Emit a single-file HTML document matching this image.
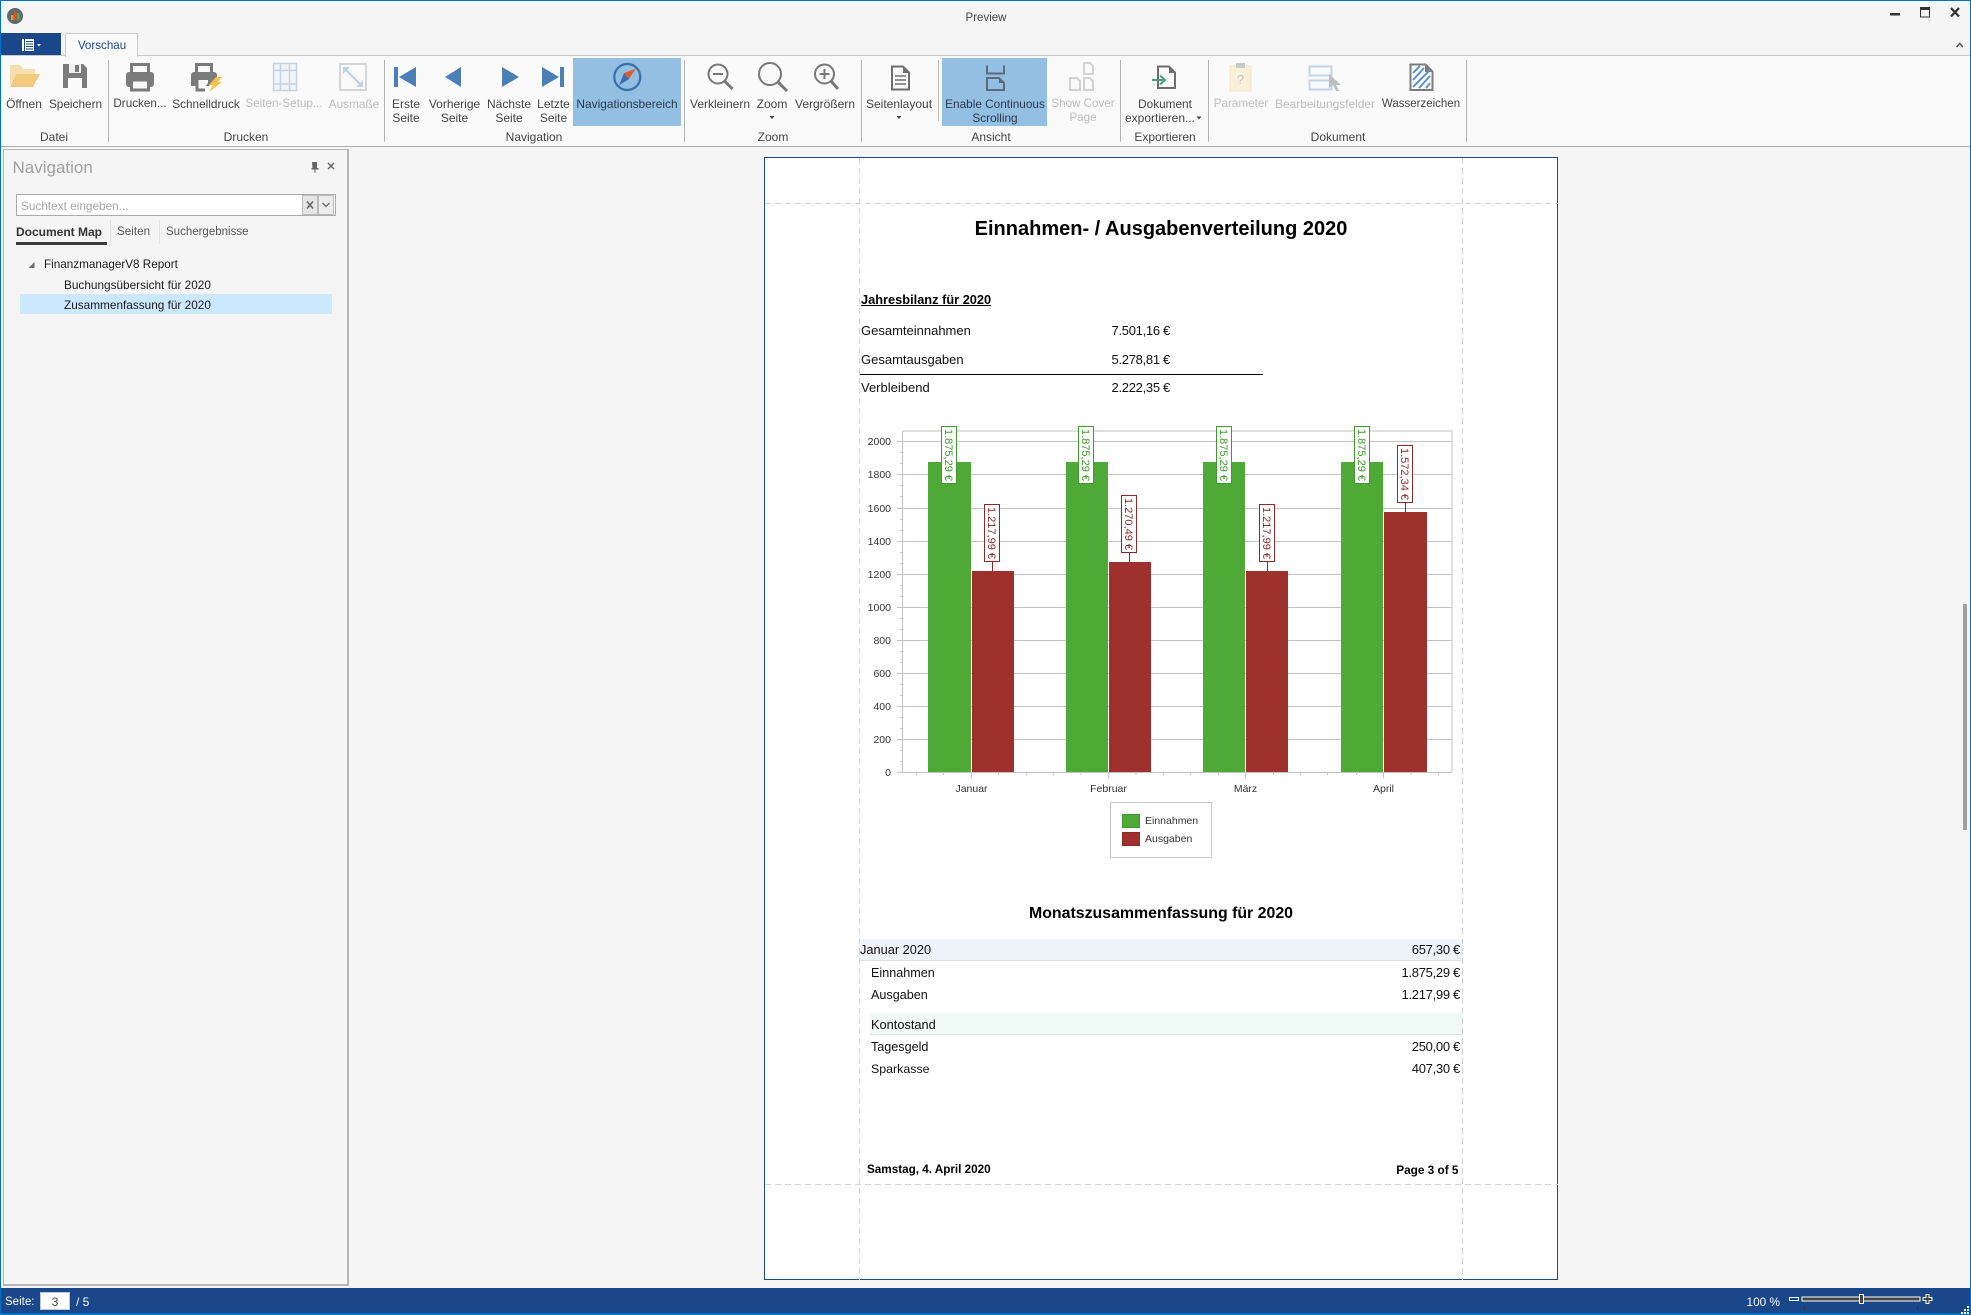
<!DOCTYPE html>
<html lang="de"><head><meta charset="utf-8"><title>Preview</title>
<style>
html,body{margin:0;padding:0;width:1971px;height:1315px;overflow:hidden;background:#f5f5f5}
body{position:relative;font-family:"Liberation Sans",sans-serif;color:#444}
div{position:absolute;box-sizing:border-box}
.c{transform:translate(-50%,-50%);white-space:nowrap;font-size:12px;line-height:14px;text-align:center}
.l{transform:translateY(-50%);white-space:nowrap;font-size:12px;line-height:14px}
.r{transform:translate(-100%,-50%);white-space:nowrap;font-size:12px;line-height:14px}
.d{color:#bdbdbd}
.p{color:#111;font-size:13px;line-height:16px}
.v{letter-spacing:-.3px}
.t{font-size:11.8px;color:#1a1a1a}
.b{font-weight:bold;color:#000}
.sep{width:1px;top:60px;height:82px;background:#b4b4b4}
.w{color:#fff}
svg{position:absolute;left:0;top:0}
</style></head><body>

<!-- ribbon background -->
<div style="left:0;top:55px;width:1971px;height:92px;background:#fafafa;border-top:1px solid #c9c9c9;border-bottom:1px solid #ababab"></div>
<div style="left:1px;top:33px;width:60px;height:22px;background:#19478a"></div>
<div style="left:65px;top:33px;width:73px;height:24px;background:#fafafa;border:1px solid #c9c9c9;border-bottom:0"></div>
<div class="c" style="left:102px;top:46px;color:#19478a;font-size:11.6px">Vorschau</div>
<div class="c" style="left:986px;top:17.500px;font-size:11.5px">Preview</div>

<!-- highlighted buttons -->
<div style="left:573px;top:58px;width:108px;height:68px;background:#93bfe2"></div>
<div style="left:942px;top:58px;width:105px;height:68px;background:#93bfe2"></div>

<!-- separators -->
<div class="sep" style="left:108px"></div><div class="sep" style="left:384px"></div><div class="sep" style="left:684px"></div><div class="sep" style="left:861px"></div><div class="sep" style="left:938px;height:61px"></div><div class="sep" style="left:1120px"></div><div class="sep" style="left:1208px"></div><div class="sep" style="left:1466px"></div>

<!-- ribbon labels -->
<div class="c" style="left:24px;top:104px">Öffnen</div>
<div class="c" style="left:75.500px;top:104px;font-size:11.8px">Speichern</div>
<div class="c" style="left:140px;top:104px;font-size:11.7px">Drucken...</div>
<div class="c" style="left:206px;top:104px;font-size:11.8px">Schnelldruck</div>
<div class="c d" style="left:284px;top:104px;font-size:11.7px">Seiten-Setup...</div>
<div class="c d" style="left:354px;top:104px;font-size:11.8px">Ausmaße</div>
<div class="c" style="left:406px;top:111px">Erste<br>Seite</div>
<div class="c" style="left:454.500px;top:111px">Vorherige<br>Seite</div>
<div class="c" style="left:509px;top:111px">Nächste<br>Seite</div>
<div class="c" style="left:553.500px;top:111px">Letzte<br>Seite</div>
<div class="c" style="left:627px;top:104px;color:#2a3a4d;font-size:11.9px">Navigationsbereich</div>
<div class="c" style="left:720px;top:104px">Verkleinern</div>
<div class="c" style="left:772px;top:104px">Zoom</div>
<div class="c" style="left:825px;top:104px">Vergrößern</div>
<div class="c" style="left:899px;top:104px">Seitenlayout</div>
<div class="c" style="left:995px;top:111px;color:#2a3a4d;font-size:11.8px">Enable Continuous<br>Scrolling</div>
<div class="c d" style="left:1083px;top:111px;font-size:11.6px">Show Cover<br>Page</div>
<div class="c" style="left:1165px;top:104px;font-size:11.8px">Dokument</div>
<div class="c" style="left:1160px;top:118px;font-size:12px">exportieren...</div>
<div class="c d" style="left:1241px;top:104px;font-size:11.7px">Parameter</div>
<div class="c d" style="left:1325px;top:104px;font-size:11.9px">Bearbeitungsfelder</div>
<div class="c" style="left:1421px;top:104px;font-size:11.5px">Wasserzeichen</div>
<div class="c" style="left:54px;top:137px">Datei</div>
<div class="c" style="left:246px;top:137px">Drucken</div>
<div class="c" style="left:534px;top:137px">Navigation</div>
<div class="c" style="left:773px;top:137px">Zoom</div>
<div class="c" style="left:991px;top:137px">Ansicht</div>
<div class="c" style="left:1165px;top:137px">Exportieren</div>
<div class="c" style="left:1338px;top:137px">Dokument</div>

<!-- navigation panel -->
<div style="left:3px;top:149px;width:346px;height:1137px;background:#f5f5f5;border:1px solid #b5b5b5;border-width:1px 2px 2px 1px"></div>
<div class="l" style="left:12.500px;top:168px;font-size:17px;line-height:20px;color:#a0a0a0">Navigation</div>
<div style="left:16px;top:194px;width:320px;height:22px;background:#fff;border:1px solid #ababab"></div>
<div class="l" style="left:21px;top:206px;color:#a5a5a5;font-size:11.8px">Suchtext eingeben...</div>
<div style="left:302px;top:195px;width:16px;height:20px;background:#e6e6e6;border:1px solid #bbb"></div>
<div style="left:318px;top:195px;width:16px;height:20px;background:#ececec;border:1px solid #bbb"></div>
<div class="l b" style="left:16px;top:232px;color:#333">Document Map</div>
<div style="left:16px;top:242px;width:91px;height:3px;background:#3a3a3a"></div>
<div style="left:110px;top:220px;width:1px;height:24px;background:#e2e2e2"></div>
<div class="l" style="left:117px;top:232px;color:#555;font-size:11.7px">Seiten</div>
<div style="left:159px;top:220px;width:1px;height:24px;background:#e2e2e2"></div>
<div class="l" style="left:166px;top:232px;color:#555;font-size:11.5px">Suchergebnisse</div>
<div style="left:20px;top:294px;width:312px;height:20px;background:#cce8ff"></div>
<div class="l t" style="left:44px;top:265px;font-size:11.7px">FinanzmanagerV8 Report</div>
<div class="l t" style="left:64px;top:285px">Buchungsübersicht für 2020</div>
<div class="l t" style="left:64px;top:305px">Zusammenfassung für 2020</div>

<!-- scrollbar -->
<div style="left:1963px;top:604px;width:4px;height:226px;background:#a0a0a0"></div>

<!-- report page -->
<div style="left:764px;top:157px;width:794px;height:1123px;background:#fff;border:1px solid #1b4a8a"></div>
<div style="left:859px;top:939px;width:604px;height:22px;background:#eef2f9;border-bottom:1px solid #dde2ea"></div>
<div style="left:870px;top:1013px;width:593px;height:22px;background:#f0f9f5;border-bottom:1px solid #dce6e2"></div>
<div style="left:860px;top:374px;width:403px;height:1px;background:#000"></div>

<div class="c b" style="left:1161px;top:229px;font-size:20px;line-height:24px">Einnahmen- / Ausgabenverteilung 2020</div>
<div class="l p b" style="left:861px;top:300px;text-decoration:underline;font-size:12.800px">Jahresbilanz für 2020</div>
<div class="l p" style="left:861px;top:331px">Gesamteinnahmen</div>
<div class="l p" style="left:861px;top:360px">Gesamtausgaben</div>
<div class="l p" style="left:861px;top:388px">Verbleibend</div>
<div class="r p v" style="left:1170px;top:331px">7.501,16 €</div>
<div class="r p v" style="left:1170px;top:360px">5.278,81 €</div>
<div class="r p v" style="left:1170px;top:388px">2.222,35 €</div>

<div class="c b" style="left:1161px;top:913.500px;font-size:15.900px;line-height:18px">Monatszusammenfassung für 2020</div>
<div class="l p" style="left:860px;top:950px;font-size:12.800px">Januar 2020</div><div class="r p v" style="left:1460px;top:950px">657,30 €</div>
<div class="l p" style="left:871px;top:973px;font-size:12.600px">Einnahmen</div><div class="r p v" style="left:1460px;top:973px">1.875,29 €</div>
<div class="l p" style="left:871px;top:995px;font-size:12.600px">Ausgaben</div><div class="r p v" style="left:1460px;top:995px">1.217,99 €</div>
<div class="l p" style="left:871px;top:1024.500px;font-size:12.800px">Kontostand</div>
<div class="l p" style="left:871px;top:1047px;font-size:12.600px">Tagesgeld</div><div class="r p v" style="left:1460px;top:1047px">250,00 €</div>
<div class="l p" style="left:871px;top:1069px;font-size:12.400px">Sparkasse</div><div class="r p v" style="left:1460px;top:1069px">407,30 €</div>
<div class="l b" style="left:867px;top:1170px;font-size:11.700px">Samstag, 4. April 2020</div>
<div class="r b" style="left:1458.500px;top:1170px;font-size:11.800px">Page 3 of 5</div>

<!-- status bar -->
<div style="left:0;top:1288px;width:1971px;height:27px;background:#19478a"></div>
<div class="l w" style="left:5px;top:1302px;font-size:11.500px">Seite:</div>
<div style="left:40px;top:1292px;width:30px;height:18px;background:#fff;border:1px solid #c0c8d8"></div>
<div class="c" style="left:55px;top:1302px;color:#444">3</div>
<div class="l w" style="left:76px;top:1302px">/ 5</div>
<div class="r w" style="left:1780px;top:1302px;font-size:11.800px">100 %</div>

<!-- window frame -->
<div style="left:0;top:0;width:1971px;height:1315px;border:1px solid #0072c6;border-bottom-width:2px;pointer-events:none"></div>

<svg width="1971" height="1315" viewBox="0 0 1971 1315" xmlns="http://www.w3.org/2000/svg">
<!-- app icon -->
<circle cx="15" cy="16" r="8" fill="#5a6b70"/><rect x="11" y="15" width="2.500" height="5" fill="#e0a030"/><rect x="14" y="11" width="2.500" height="9" fill="#d9502e"/><rect x="17" y="13" width="2.500" height="7" fill="#58a83e"/>
<!-- app menu icon -->
<path d="M22 39h2v12h-2zM25 39h9v12h-9z" fill="#fff"/><path d="M26 41.500h7M26 44h7M26 46.500h7M26 49h7" stroke="#19478a"/><path d="M37 44h4l-2 2.500z" fill="#dfe6f0"/>
<!-- window buttons -->
<rect x="1890" y="13" width="10" height="2.500" fill="#333"/>
<rect x="1920.500" y="8" width="9" height="9" fill="none" stroke="#333"/><rect x="1920" y="7" width="10" height="3" fill="#333"/>
<path d="M1951 8l8 8.500M1959 8l-8 8.500" stroke="#333" stroke-width="2.200"/>
<path d="M1956.500 47l3.200-3.500 3.200 3.500" fill="none" stroke="#555" stroke-width="1.500"/>

<!-- Öffnen -->
<path d="M10 65h10l3 4h12v5H16l-6 11z" fill="#f6dfae"/><path d="M16 74h24l-7 13H10z" fill="#f2ca7d"/>
<!-- Speichern -->
<path d="M63 64h20l4 4v20H63z" fill="#7b7b7b"/><rect x="69" y="64" width="12" height="9" fill="#f0f0f0"/><rect x="75" y="65" width="4" height="7" fill="#7b7b7b"/><rect x="68" y="78" width="14" height="10" fill="#fafafa"/>
<!-- Drucken -->
<rect x="131.500" y="64.500" width="17" height="11" fill="#fafafa" stroke="#7b7b7b" stroke-width="3"/><rect x="126" y="72" width="28" height="15" rx="3" fill="#7b7b7b"/><rect x="131.500" y="80" width="17" height="10" fill="#fafafa" stroke="#7b7b7b" stroke-width="3"/>
<!-- Schnelldruck -->
<rect x="196.500" y="64.500" width="15" height="11" fill="#fafafa" stroke="#7b7b7b" stroke-width="3"/><path d="M194 72h20a3 3 0 0 1 3 3v2l-8 9h-18V75a3 3 0 0 1 3-3z" fill="#7b7b7b"/><path d="M197 80h11v3l-5 7h-6z" fill="#fafafa"/><path d="M197 80v10h8" fill="none" stroke="#7b7b7b" stroke-width="3"/><path d="M216 77h6l-4 5h4l-13 10 4-7h-4z" fill="#f2c24f"/>
<!-- Seiten-Setup -->
<rect x="273.500" y="63.500" width="23" height="27" fill="#f1f4f8" stroke="#c6d2e1" stroke-width="1.500"/><path d="M280.500 63v28M289.500 63v28M273 70.500h24M273 84h24" stroke="#c6d2e1" stroke-width="1.500"/>
<!-- Ausmaße -->
<rect x="340" y="64" width="26" height="26" fill="#fafafa" stroke="#d6d6d6" stroke-width="2"/><path d="M344 68l18 18" stroke="#bcd3ea" stroke-width="2"/><path d="M343 67h7l-7 7zM363 87h-7l7-7z" fill="#bcd3ea"/>
<!-- nav -->
<path d="M394 67h4v20h-4zM416 67v20l-17-10zM461 67v20l-16-10zM502 67v20l17-10zM542 67v20l17-10zM560 67h4v20h-4z" fill="#4a7fb8"/>
<!-- compass -->
<circle cx="627.300" cy="77" r="13" fill="none" stroke="#3a6fa8" stroke-width="2.200"/><path d="M636 68.500l-12 4.500 5 6z" fill="#dd5a34"/><path d="M619 85.500l5-12.500 5 6z" fill="#3a6fa8"/>
<!-- zoom icons -->
<g fill="none" stroke="#777">
<circle cx="718" cy="74" r="9.500" stroke-width="2"/><path d="M724.500 81l8 8" stroke-width="3"/><path d="M713 74h10" stroke-width="2"/>
<circle cx="770" cy="74" r="11" stroke-width="2"/><path d="M778 82l9 9" stroke-width="3"/>
<circle cx="824.500" cy="74" r="9.500" stroke-width="2"/><path d="M831 81l7 8" stroke-width="3"/><path d="M819.500 74h10M824.500 69v10" stroke-width="2"/>
</g>
<!-- dropdown arrows -->
<path d="M769.500 116h5l-2.500 3zM896.500 116h5l-2.500 3zM1196.500 116.500h5l-2.500 3z" fill="#444"/>
<!-- Seitenlayout -->
<path d="M892 66.500h11l6 6V89.500H892z" fill="#fafafa" stroke="#6e6e6e" stroke-width="2"/><path d="M903 66v7h6z" fill="#6e6e6e"/><path d="M895 76h11M895 80h11M895 84h11" stroke="#6e6e6e" stroke-width="1.500"/>
<!-- Enable Continuous -->
<g fill="none" stroke="#5b6b7a" stroke-width="2"><path d="M987 65.500v8h17v-8M987 90V78h12l5 5v7z"/></g>
<path d="M999 78v5h5z" fill="#5b6b7a"/>
<!-- Show cover -->
<g fill="#fafafa" stroke="#d2d2d2" stroke-width="2"><path d="M1084 63h6l3 3v8h-9zM1070 78h7l3 3v9h-10zM1084 78h6l3 3v9h-9z"/></g>
<!-- Export -->
<path d="M1158 66.500h11l6 6V88h-17z" fill="#fafafa" stroke="#6e6e6e" stroke-width="2"/><path d="M1169 66v7h6z" fill="#6e6e6e"/><path d="M1152 80h11" stroke="#4a9a80" stroke-width="2"/><path d="M1160 75.500l5 4.500-5 4.500" fill="none" stroke="#4a9a80" stroke-width="2"/>
<!-- Parameter -->
<rect x="1230" y="66" width="21" height="25" fill="#faf0d9" stroke="#f5e7c6"/><rect x="1236" y="63" width="9" height="5" fill="#c8c8c8"/>
<text x="1240.500" y="84" font-size="13" fill="#c0c0c0" text-anchor="middle" font-family="Liberation Sans, sans-serif">?</text>
<!-- Bearbeitungsfelder -->
<g fill="none" stroke="#c3d3e8" stroke-width="2"><path d="M1309.500 66.500h22v9h-22zM1309.500 80.500h22v9h-22z"/></g>
<path d="M1329 74l12 11h-5l3 6-3 0-3-6-4 3z" fill="#bdbdbd"/>
<!-- Wasserzeichen -->
<path d="M1410.500 64.500h15l7 7V90h-22z" fill="#fff" stroke="#7b7b7b" stroke-width="2"/><path d="M1425 64v8h7z" fill="#7b7b7b"/>
<path d="M1413 73l7-7M1413 80l11-12M1413 87l17-17M1419 88l11-12M1426 88l4-5" stroke="#5a93cf" stroke-width="2"/>

<!-- panel small icons -->
<path d="M312 162h5v6h1.500v1.500h-3v3.500h-1v-3.500h-3V168h1z" fill="#666"/>
<path d="M328 163l6 6M334 163l-6 6" stroke="#666" stroke-width="1.500"/>
<path d="M307 201.500l6 7M313 201.500l-6 7" stroke="#666" stroke-width="1.600"/>
<path d="M322.500 203l3.500 3.500 3.500-3.500" fill="none" stroke="#666" stroke-width="1.300"/>
<path d="M34.500 262v6h-6z" fill="#707070"/>

<!-- dashed margins -->
<g stroke="#d2d2d2" stroke-dasharray="6 4" fill="none">
<path d="M859.500 158v1122M1462.500 158v1122M765 203.500h793M765 1184.500h793"/>
</g>

<!-- chart -->
<g fill="none" stroke="#c2c2c2">
<path d="M902.500 431h549.500v341M902.500 431v341"/>
<path d="M897 441.500h555M897 474.500h555M897 508.500h555M897 541.500h555M897 574.500h555M897 607.500h555M897 640.500h555M897 673.500h555M897 706.500h555M897 739.500h555M897 772.500h555"/>
<path d="M900 452.500h3M900 463.500h3M900 485.500h3M900 496.500h3M900 519.500h3M900 530.500h3M900 552.500h3M900 563.500h3M900 585.500h3M900 596.500h3M900 618.500h3M900 629.500h3M900 651.500h3M900 662.500h3M900 684.500h3M900 695.500h3M900 717.500h3M900 728.500h3M900 750.500h3M900 761.500h3"/>
<path d="M971.500 772v6M1108.500 772v6M1245.500 772v6M1383.500 772v6"/>
<path d="M916.500 772v3M943.500 772v3M998.500 772v3M1026.500 772v3M1053.500 772v3M1081 772v3M1136 772v3M1163.500 772v3M1190.500 772v3M1218.500 772v3M1273.500 772v3M1300.500 772v3M1327.500 772v3M1356.500 772v3M1411 772v3M1438.500 772v3"/>
</g>
<g fill="#4fa937"><rect x="928" y="462" width="43" height="310"/><rect x="1066" y="462" width="42" height="310"/><rect x="1203" y="462" width="42" height="310"/><rect x="1341" y="462" width="42" height="310"/></g>
<g fill="#9e302e"><rect x="972" y="571" width="42" height="201"/><rect x="1109" y="562" width="42" height="210"/><rect x="1246" y="571" width="42" height="201"/><rect x="1384" y="512" width="43" height="260"/></g>
<g fill="#fff" stroke="#3f9a2d"><rect x="941.500" y="426.500" width="15" height="57"/><rect x="1078.500" y="426.500" width="15" height="57"/><rect x="1216.500" y="426.500" width="15" height="57"/><rect x="1354.500" y="426.500" width="15" height="57"/></g>
<g fill="#fff" stroke="#8c2a28"><rect x="984.500" y="504.500" width="15" height="57"/><rect x="1121.500" y="495.500" width="15" height="57"/><rect x="1259.500" y="504.500" width="15" height="57"/><rect x="1397.500" y="445.500" width="15" height="57"/></g>
<path d="M992.500 562v9M1129.500 553v9M1267.500 562v9M1405.500 503v9" stroke="#8c2a28"/>
<g font-family="Liberation Sans, sans-serif" font-size="11" text-anchor="middle" fill="#3f9a2d">
<text transform="translate(945,455) rotate(90)">1.875,29 €</text>
<text transform="translate(1082,455) rotate(90)">1.875,29 €</text>
<text transform="translate(1220,455) rotate(90)">1.875,29 €</text>
<text transform="translate(1358,455) rotate(90)">1.875,29 €</text>
</g>
<g font-family="Liberation Sans, sans-serif" font-size="11" text-anchor="middle" fill="#8c2a28">
<text transform="translate(988,533) rotate(90)">1.217,99 €</text>
<text transform="translate(1125,524) rotate(90)">1.270,49 €</text>
<text transform="translate(1263,533) rotate(90)">1.217,99 €</text>
<text transform="translate(1401,474) rotate(90)">1.572,34 €</text>
</g>
<g font-family="Liberation Sans, sans-serif" font-size="10.500" text-anchor="end" fill="#333">
<text x="891" y="445">2000</text><text x="891" y="478">1800</text><text x="891" y="512">1600</text><text x="891" y="545">1400</text><text x="891" y="578">1200</text><text x="891" y="611">1000</text><text x="891" y="644">800</text><text x="891" y="677">600</text><text x="891" y="710">400</text><text x="891" y="743">200</text><text x="891" y="776">0</text>
</g>
<g font-family="Liberation Sans, sans-serif" font-size="10.500" text-anchor="middle" fill="#333">
<text x="971.500" y="792">Januar</text><text x="1108.500" y="792">Februar</text><text x="1245.500" y="792">März</text><text x="1383.500" y="792">April</text>
</g>
<rect x="1110.500" y="802.500" width="101" height="55" fill="#fff" stroke="#c8c8c8"/>
<rect x="1122.500" y="814.500" width="17" height="13" fill="#4fa937" stroke="#3f9a2d"/>
<rect x="1122.500" y="832.500" width="17" height="13" fill="#9e302e" stroke="#8c2a28"/>
<g font-family="Liberation Sans, sans-serif" font-size="10.500" fill="#333"><text x="1145" y="824">Einnahmen</text><text x="1145" y="842">Ausgaben</text></g>

<!-- status zoom slider -->
<rect x="1789.500" y="1297.500" width="9" height="3" fill="none" stroke="#fff"/>
<rect x="1802" y="1297" width="118" height="4" fill="#444" stroke="#fff"/>
<rect x="1859.500" y="1294.500" width="4" height="9" fill="#444" stroke="#fff"/>
<path d="M1926 1294.500h3v3h3v3h-3v3h-3v-3h-3v-3h3z" fill="#444" stroke="#fff"/>
<path d="M1804.500 1307v3M1917.500 1307v3" stroke="#333"/>
<path d="M1967 1306h2v2h-2zM1964 1309h2v2h-2zM1967 1309h2v2h-2zM1961 1312h2v2h-2zM1964 1312h2v2h-2zM1967 1312h2v2h-2z" fill="#fff"/>
</svg>
</body></html>
